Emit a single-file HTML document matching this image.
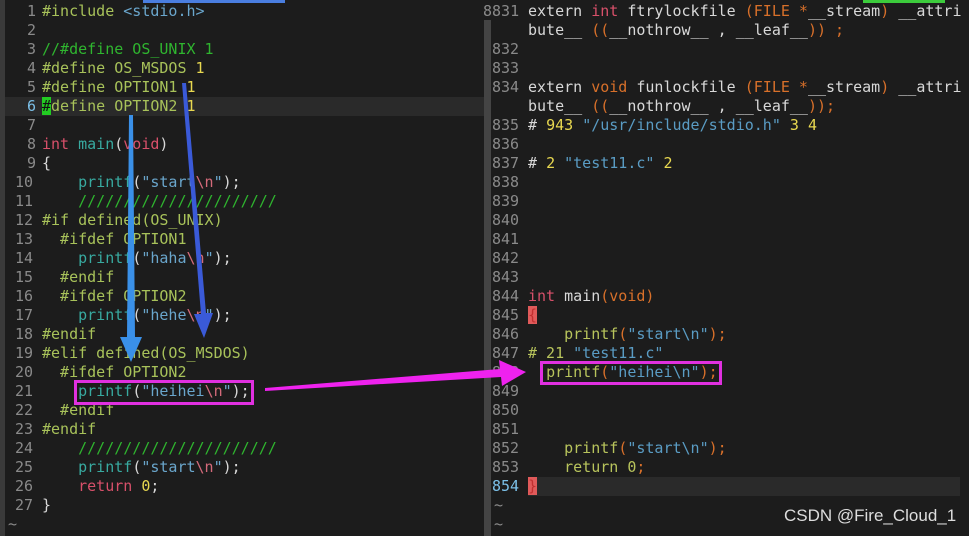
<!DOCTYPE html>
<html><head><meta charset="utf-8"><style>
body{margin:0;width:969px;height:536px;background:#1c1c1c;overflow:hidden;position:relative;font-family:"DejaVu Sans Mono","Liberation Mono",monospace;font-size:15px;}
.l{position:absolute;height:19px;line-height:19px;white-space:pre;color:#d8d8d8;}
.n{color:#8a8a8a;}
.p{color:#a8c25a}.s{color:#6aa6cc}.c{color:#2fb52f}.k{color:#d8506a}.f{color:#38aaa0}.e{color:#d46a7a}.y{color:#e8d850}.w{color:#d8d8d8}
.o{color:#d8702a}.g{color:#b8c45c}.b{color:#5a9cc4}
</style></head><body>
<div style="position:absolute;left:0;top:0;width:5px;height:536px;background:#3a3a3a"></div>
<div style="position:absolute;left:484px;top:20px;width:7px;height:516px;background:#444"></div>
<div style="position:absolute;left:5px;top:97px;width:479px;height:19px;background:#2a2a2a"></div>
<div style="position:absolute;left:528px;top:477px;width:432px;height:19px;background:#2a2a2a"></div>
<div style="position:absolute;left:143px;top:0;width:142px;height:3px;background:#4a7ee0"></div>
<div style="position:absolute;left:863px;top:0;width:82px;height:3px;background:#3ccc3c"></div>

<div class="l n" style="left:27px;top:2px">1</div><div class="l p" style="left:42px;top:2px">#include <span class="s">&lt;stdio.h&gt;</span></div>
<div class="l n" style="left:27px;top:21px">2</div>
<div class="l n" style="left:27px;top:40px">3</div><div class="l c" style="left:42px;top:40px">//#define OS_UNIX 1</div>
<div class="l n" style="left:27px;top:59px">4</div><div class="l p" style="left:42px;top:59px">#define OS_MSDOS <span class="y">1</span></div>
<div class="l n" style="left:27px;top:78px">5</div><div class="l p" style="left:42px;top:78px">#define OPTION1 <span class="y">1</span></div>
<div class="l" style="left:27px;top:97px;color:#7cc0e8">6</div><div class="l p" style="left:42px;top:97px"><span style="background:#22cc22;color:#111">#</span>define OPTION2 <span class="y">1</span></div>
<div class="l n" style="left:27px;top:116px">7</div>
<div class="l n" style="left:27px;top:135px">8</div><div class="l" style="left:42px;top:135px"><span class="k">int</span> <span class="f">main</span>(<span class="k">void</span>)</div>
<div class="l n" style="left:27px;top:154px">9</div><div class="l" style="left:42px;top:154px">{</div>
<div class="l n" style="left:15px;top:173px">10</div><div class="l" style="left:42px;top:173px">    <span class="f">printf</span>(<span class="s">"start<span class="e">\n</span>"</span>);</div>
<div class="l n" style="left:15px;top:192px">11</div><div class="l c" style="left:42px;top:192px">    //////////////////////</div>
<div class="l n" style="left:15px;top:211px">12</div><div class="l p" style="left:42px;top:211px">#if defined(OS_UNIX)</div>
<div class="l n" style="left:15px;top:230px">13</div><div class="l p" style="left:42px;top:230px">  #ifdef OPTION1</div>
<div class="l n" style="left:15px;top:249px">14</div><div class="l" style="left:42px;top:249px">    <span class="f">printf</span>(<span class="s">"haha<span class="e">\n</span>"</span>);</div>
<div class="l n" style="left:15px;top:268px">15</div><div class="l p" style="left:42px;top:268px">  #endif</div>
<div class="l n" style="left:15px;top:287px">16</div><div class="l p" style="left:42px;top:287px">  #ifdef OPTION2</div>
<div class="l n" style="left:15px;top:306px">17</div><div class="l" style="left:42px;top:306px">    <span class="f">printf</span>(<span class="s">"hehe<span class="e">\n</span>"</span>);</div>
<div class="l n" style="left:15px;top:325px">18</div><div class="l p" style="left:42px;top:325px">#endif</div>
<div class="l n" style="left:15px;top:344px">19</div><div class="l p" style="left:42px;top:344px">#elif defined(OS_MSDOS)</div>
<div class="l n" style="left:15px;top:363px">20</div><div class="l p" style="left:42px;top:363px">  #ifdef OPTION2</div>
<div class="l n" style="left:15px;top:382px">21</div><div class="l" style="left:42px;top:382px">    <span class="f">printf</span>(<span class="s">"heihei<span class="e">\n</span>"</span>);</div>
<div class="l n" style="left:15px;top:401px">22</div><div class="l p" style="left:42px;top:401px">  #endif</div>
<div class="l n" style="left:15px;top:420px">23</div><div class="l p" style="left:42px;top:420px">#endif</div>
<div class="l n" style="left:15px;top:439px">24</div><div class="l c" style="left:42px;top:439px">    //////////////////////</div>
<div class="l n" style="left:15px;top:458px">25</div><div class="l" style="left:42px;top:458px">    <span class="f">printf</span>(<span class="s">"start<span class="e">\n</span>"</span>);</div>
<div class="l n" style="left:15px;top:477px">26</div><div class="l" style="left:42px;top:477px">    <span class="k">return</span> <span class="y">0</span>;</div>
<div class="l n" style="left:15px;top:496px">27</div><div class="l" style="left:42px;top:496px">}</div>
<div class="l n" style="left:8px;top:515px">~</div>

<div class="l n" style="left:483px;top:2px">8831</div><div class="l w" style="left:528px;top:2px">extern <span class="k">int</span> ftrylockfile <span class="o">(FILE *</span>__stream<span class="o">)</span> __attri</div>
<div class="l w" style="left:528px;top:21px">bute__ <span class="o">((</span>__nothrow__ , __leaf__<span class="o">)) ;</span></div>
<div class="l n" style="left:492px;top:40px">832</div>
<div class="l n" style="left:492px;top:59px">833</div>
<div class="l n" style="left:492px;top:78px">834</div><div class="l w" style="left:528px;top:78px">extern <span class="o">void</span> funlockfile <span class="o">(FILE *</span>__stream<span class="o">)</span> __attri</div>
<div class="l w" style="left:528px;top:97px">bute__ <span class="o">((</span>__nothrow__ , __leaf__<span class="o">));</span></div>
<div class="l n" style="left:492px;top:116px">835</div><div class="l w" style="left:528px;top:116px"># <span class="y">943</span> <span class="b">"/usr/include/stdio.h"</span> <span class="y">3 4</span></div>
<div class="l n" style="left:492px;top:135px">836</div>
<div class="l n" style="left:492px;top:154px">837</div><div class="l w" style="left:528px;top:154px"># <span class="y">2</span> <span class="b">"test11.c"</span> <span class="y">2</span></div>
<div class="l n" style="left:492px;top:173px">838</div>
<div class="l n" style="left:492px;top:192px">839</div>
<div class="l n" style="left:492px;top:211px">840</div>
<div class="l n" style="left:492px;top:230px">841</div>
<div class="l n" style="left:492px;top:249px">842</div>
<div class="l n" style="left:492px;top:268px">843</div>
<div class="l n" style="left:492px;top:287px">844</div><div class="l" style="left:528px;top:287px"><span class="k">int</span> <span class="w">main</span><span class="o">(void)</span></div>
<div class="l n" style="left:492px;top:306px">845</div><div class="l" style="left:528px;top:306px"><span style="background:#e05a5a;color:#c03030">{</span></div>
<div class="l n" style="left:492px;top:325px">846</div><div class="l" style="left:528px;top:325px">    <span class="g">printf</span><span class="o">(</span><span class="b">"start\n"</span><span class="o">);</span></div>
<div class="l n" style="left:492px;top:344px">847</div><div class="l" style="left:528px;top:344px"><span class="g"># 21</span> <span class="b">"test11.c"</span></div>
<div class="l n" style="left:492px;top:363px">848</div><div class="l" style="left:528px;top:363px">  <span class="g">printf</span><span class="o">(</span><span class="b">"heihei\n"</span><span class="o">);</span></div>
<div class="l n" style="left:492px;top:382px">849</div>
<div class="l n" style="left:492px;top:401px">850</div>
<div class="l n" style="left:492px;top:420px">851</div>
<div class="l n" style="left:492px;top:439px">852</div><div class="l" style="left:528px;top:439px">    <span class="g">printf</span><span class="o">(</span><span class="b">"start\n"</span><span class="o">);</span></div>
<div class="l n" style="left:492px;top:458px">853</div><div class="l" style="left:528px;top:458px">    <span class="g">return</span> <span class="g">0</span><span class="o">;</span></div>
<div class="l" style="left:492px;top:477px;color:#7cc0e8">854</div><div class="l" style="left:528px;top:477px"><span style="background:#e05a5a;color:#c03030">}</span></div>
<div class="l n" style="left:494px;top:496px">~</div>
<div class="l n" style="left:494px;top:515px">~</div>

<div style="position:absolute;left:74px;top:380px;width:174px;height:19px;border:3px solid #e030e0"></div>
<div style="position:absolute;left:540px;top:361px;width:176px;height:18px;border:3px solid #e030e0"></div>
<svg style="position:absolute;left:0;top:0" width="969" height="536">
<polygon points="129,115 133,115 135,337 142,337 131,362 120,337 127,337" fill="#3a90e8"/>
<polygon points="182,83 186,83 206,313 213,313 204,338 194,314 201,314" fill="#3a5ad8"/>
<polygon points="265,391 265,388 500,369 499,360 526,372 502,386 501,377" fill="#ee22ee"/>
</svg>
<div style="position:absolute;left:784px;top:506px;font-family:'Liberation Sans',sans-serif;font-size:17px;color:#ddd">CSDN @Fire_Cloud_1</div>
</body></html>
